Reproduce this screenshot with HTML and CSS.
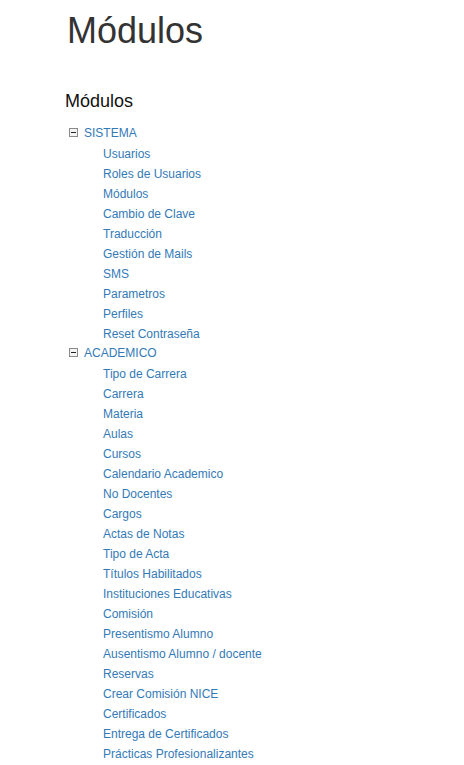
FILE: index.html
```html
<!DOCTYPE html>
<html lang="es">
<head>
<meta charset="utf-8">
<title>Módulos</title>
<link rel="stylesheet" href="styles.css">
</head>
<body>
<div class="page">
  <h1 class="page-title">Módulos</h1>
  <h3 class="section-title">Módulos</h3>
  <ul class="tree">
    <li class="node">
      <div class="node-head"><span class="toggle"></span><a class="link" href="#">SISTEMA</a></div>
      <ul class="children">
        <li><a class="link" href="#">Usuarios</a></li>
        <li><a class="link" href="#">Roles de Usuarios</a></li>
        <li><a class="link" href="#">Módulos</a></li>
        <li><a class="link" href="#">Cambio de Clave</a></li>
        <li><a class="link" href="#">Traducción</a></li>
        <li><a class="link" href="#">Gestión de Mails</a></li>
        <li><a class="link" href="#">SMS</a></li>
        <li><a class="link" href="#">Parametros</a></li>
        <li><a class="link" href="#">Perfiles</a></li>
        <li><a class="link" href="#">Reset Contraseña</a></li>
      </ul>
    </li>
    <li class="node">
      <div class="node-head"><span class="toggle"></span><a class="link" href="#">ACADEMICO</a></div>
      <ul class="children">
        <li><a class="link" href="#">Tipo de Carrera</a></li>
        <li><a class="link" href="#">Carrera</a></li>
        <li><a class="link" href="#">Materia</a></li>
        <li><a class="link" href="#">Aulas</a></li>
        <li><a class="link" href="#">Cursos</a></li>
        <li><a class="link" href="#">Calendario Academico</a></li>
        <li><a class="link" href="#">No Docentes</a></li>
        <li><a class="link" href="#">Cargos</a></li>
        <li><a class="link" href="#">Actas de Notas</a></li>
        <li><a class="link" href="#">Tipo de Acta</a></li>
        <li><a class="link" href="#">Títulos Habilitados</a></li>
        <li><a class="link" href="#">Instituciones Educativas</a></li>
        <li><a class="link" href="#">Comisión</a></li>
        <li><a class="link" href="#">Presentismo Alumno</a></li>
        <li><a class="link" href="#">Ausentismo Alumno / docente</a></li>
        <li><a class="link" href="#">Reservas</a></li>
        <li><a class="link" href="#">Crear Comisión NICE</a></li>
        <li><a class="link" href="#">Certificados</a></li>
        <li><a class="link" href="#">Entrega de Certificados</a></li>
        <li><a class="link" href="#">Prácticas Profesionalizantes</a></li>
      </ul>
    </li>
  </ul>
</div>
</body>
</html>
```
FILE: styles.css
```css
html, body {
  margin: 0;
  padding: 0;
  background: #fff;
}
body {
  font-family: "Liberation Sans", Arial, sans-serif;
  color: #333;
  overflow: hidden;
}
.page {
  padding: 11px 0 0 65px;
}
.page-title {
  margin: 0;
  font-size: 36px;
  font-weight: 500;
  line-height: 1.1;
  color: #333;
  padding-left: 2px;
}
.section-title {
  margin: 40px 0 12px 0;
  font-size: 18px;
  font-weight: 400;
  line-height: 20px;
  color: #111;
}
.tree, .children {
  list-style: none;
  margin: 0;
  padding: 0;
}
.node-head {
  display: flex;
  align-items: center;
  height: 20px;
}
.toggle {
  box-sizing: border-box;
  width: 9px;
  height: 9px;
  margin-left: 4px;
  margin-right: 6px;
  border: 1px solid #8a8a8a;
  background: #f4f4f4;
  position: relative;
}
.toggle::after {
  content: "";
  position: absolute;
  left: 1px;
  right: 1px;
  top: 3px;
  height: 1px;
  background: #222;
}
.children {
  padding-left: 38px;
}
.children li {
  height: 20px;
  line-height: 20px;
}
.link {
  font-size: 12px;
  line-height: 20px;
  color: #337ab7;
  text-decoration: none;
}
```
